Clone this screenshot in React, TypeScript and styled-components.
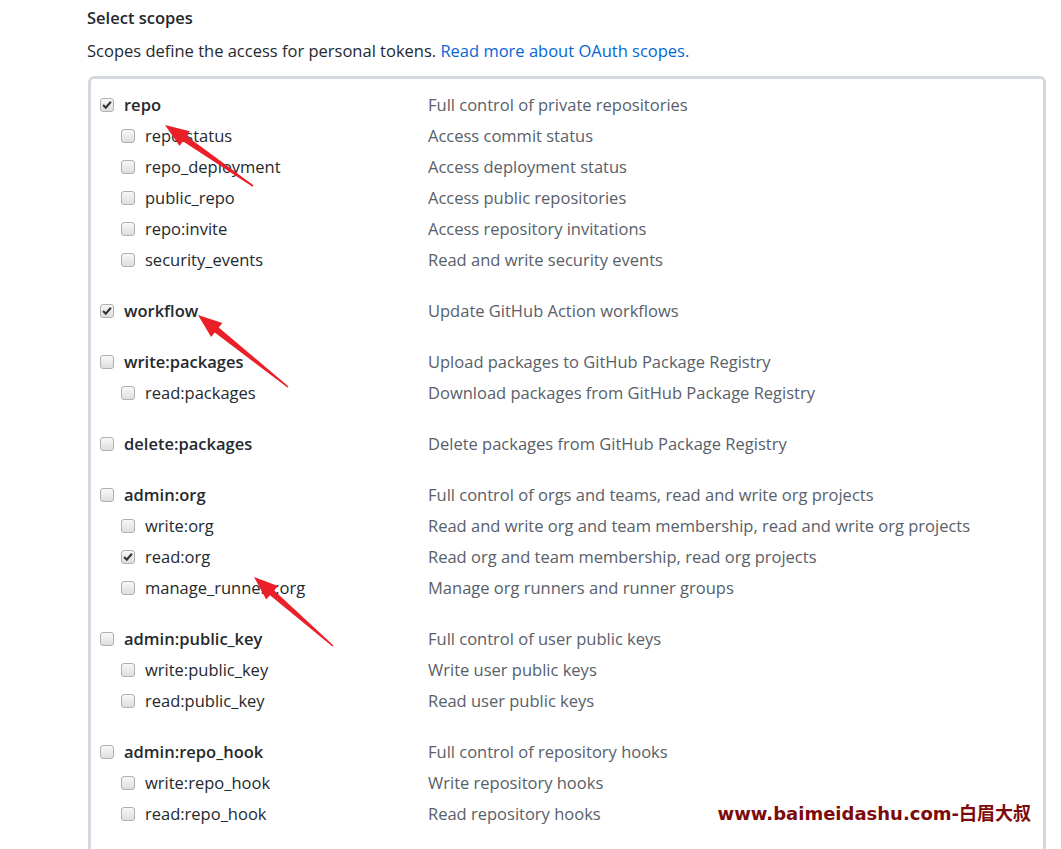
import React from 'react';
import styled, { createGlobalStyle } from 'styled-components';

const GlobalStyle = createGlobalStyle`
  body {
    margin: 0;
    background: #fff;
    font-family: "Open Sans", "Noto Sans", sans-serif;
    color: #24292e;
  }
`;

type Scope = { name: string; desc: string; checked?: boolean };
type Group = { parent: Scope; children: Scope[] };

const groups: Group[] = [
  {
    parent: { name: 'repo', desc: 'Full control of private repositories', checked: true },
    children: [
      { name: 'repo:status', desc: 'Access commit status' },
      { name: 'repo_deployment', desc: 'Access deployment status' },
      { name: 'public_repo', desc: 'Access public repositories' },
      { name: 'repo:invite', desc: 'Access repository invitations' },
      { name: 'security_events', desc: 'Read and write security events' },
    ],
  },
  {
    parent: { name: 'workflow', desc: 'Update GitHub Action workflows', checked: true },
    children: [],
  },
  {
    parent: { name: 'write:packages', desc: 'Upload packages to GitHub Package Registry' },
    children: [{ name: 'read:packages', desc: 'Download packages from GitHub Package Registry' }],
  },
  {
    parent: { name: 'delete:packages', desc: 'Delete packages from GitHub Package Registry' },
    children: [],
  },
  {
    parent: { name: 'admin:org', desc: 'Full control of orgs and teams, read and write org projects' },
    children: [
      { name: 'write:org', desc: 'Read and write org and team membership, read and write org projects' },
      { name: 'read:org', desc: 'Read org and team membership, read org projects', checked: true },
      { name: 'manage_runners:org', desc: 'Manage org runners and runner groups' },
    ],
  },
  {
    parent: { name: 'admin:public_key', desc: 'Full control of user public keys' },
    children: [
      { name: 'write:public_key', desc: 'Write user public keys' },
      { name: 'read:public_key', desc: 'Read user public keys' },
    ],
  },
  {
    parent: { name: 'admin:repo_hook', desc: 'Full control of repository hooks' },
    children: [
      { name: 'write:repo_hook', desc: 'Write repository hooks' },
      { name: 'read:repo_hook', desc: 'Read repository hooks' },
    ],
  },
];

// red annotation arrows: [tipX, tipY, tailX, tailY]
const arrows: [number, number, number, number][] = [
  [165, 125, 253, 186],
  [198, 315, 288, 387],
  [254, 577, 333, 646],
];

const Page = styled.div`
  position: relative;
  height: 849px;
  overflow: hidden;
  padding: 6px 0 0 87px;
  box-sizing: border-box;
`;

const Heading = styled.h3`
  margin: 0;
  font-size: 16.5px;
  line-height: 24px;
  font-weight: 600;
  color: #24292e;
`;

const Intro = styled.p`
  margin: 9px 0 0;
  font-size: 16.5px;
  line-height: 24px;
  color: #24292e;

  a {
    color: #0366d6;
    text-decoration: none;
  }
`;

const Panel = styled.div`
  margin: 13px 0 0 1px;
  width: 958px;
  border: 3px solid #d4d9e0;
  border-bottom: none;
  border-radius: 6px 6px 0 0;
  padding: 10px 0 0 9px;
  box-sizing: border-box;
  height: 800px;
`;

const GroupBlock = styled.div`
  margin-bottom: 20px;
`;

const Row = styled.div<{ $child?: boolean }>`
  display: grid;
  grid-template-columns: ${(p) => (p.$child ? '307px' : '328px')} 1fr;
  padding-left: ${(p) => (p.$child ? '21px' : '0')};
  height: 31px;
  align-items: center;
`;

const Label = styled.label<{ $strong?: boolean }>`
  display: flex;
  align-items: center;
  gap: 10px;
  font-size: 16.5px;
  font-weight: ${(p) => (p.$strong ? 600 : 400)};
  color: #24292e;
  white-space: nowrap;
`;

const Desc = styled.span`
  font-size: 16.5px;
  color: #586069;
  white-space: nowrap;
`;

const Box = styled.span`
  flex: none;
  width: 14px;
  height: 14px;
  margin-top: 1px;
  box-sizing: border-box;
  border: 1px solid #b0b0b0;
  border-radius: 3px;
  background: linear-gradient(#f8f8f8, #dedede);
  display: flex;
  align-items: center;
  justify-content: center;
`;

const Overlay = styled.svg`
  position: absolute;
  left: 0;
  top: 0;
  pointer-events: none;
`;

const Watermark = styled.div`
  position: absolute;
  right: 30px;
  top: 799px;
  font-family: "DejaVu Sans", "Noto Sans CJK SC", sans-serif;
  font-weight: 700;
  font-size: 18px;
  color: #7d0a0a;
`;

const Checkbox: React.FC<{ checked?: boolean }> = ({ checked }) => (
  <Box>
    {checked && (
      <svg width="10" height="10" viewBox="0 0 9 9">
        <path d="M1 4.6 L3.4 7 L8 1.6" fill="none" stroke="#333" strokeWidth="1.9" />
      </svg>
    )}
  </Box>
);

function arrowPoints(tx: number, ty: number, ex: number, ey: number) {
  const dx = ex - tx;
  const dy = ey - ty;
  const len = Math.hypot(dx, dy);
  const ux = dx / len;
  const uy = dy / len;
  const nx = -uy;
  const ny = ux;
  const head = 24;
  const hw = 9;
  const sw = 3.2;
  const tw = 0.8;
  const bx = tx + ux * head;
  const by = ty + uy * head;
  const nb = (w: number) => [bx + nx * w, by + ny * w];
  const pts = [
    [tx, ty],
    nb(hw),
    nb(sw),
    [ex + nx * tw, ey + ny * tw],
    [ex - nx * tw, ey - ny * tw],
    nb(-sw),
    nb(-hw),
  ];
  return pts.map((p) => p.join(',')).join(' ');
}

export default function App() {
  return (
    <>
      <GlobalStyle />
      <Page>
        <Heading>Select scopes</Heading>
        <Intro>
          Scopes define the access for personal tokens. <a href="#">Read more about OAuth scopes.</a>
        </Intro>
        <Panel>
          {groups.map((g) => (
            <GroupBlock key={g.parent.name}>
              <Row>
                <Label $strong>
                  <Checkbox checked={g.parent.checked} />
                  {g.parent.name}
                </Label>
                <Desc>{g.parent.desc}</Desc>
              </Row>
              {g.children.map((c) => (
                <Row $child key={c.name}>
                  <Label>
                    <Checkbox checked={c.checked} />
                    {c.name}
                  </Label>
                  <Desc>{c.desc}</Desc>
                </Row>
              ))}
            </GroupBlock>
          ))}
        </Panel>
        <Overlay width="1061" height="849">
          {arrows.map(([a, b, c, d], i) => (
            <polygon key={i} points={arrowPoints(a, b, c, d)} fill="#ea1f27" />
          ))}
        </Overlay>
        <Watermark>www.baimeidashu.com-白眉大叔</Watermark>
      </Page>
    </>
  );
}
